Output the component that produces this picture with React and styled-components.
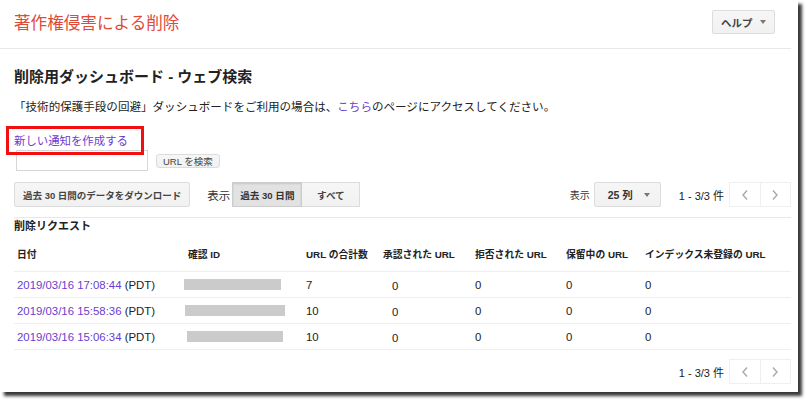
import React from "react";
import styled, { createGlobalStyle, css } from "styled-components";

const GlobalStyle = createGlobalStyle`
  html, body { margin: 0; padding: 0; background: #fff; }
  body {
    font-family: "Liberation Sans", "Noto Sans CJK JP", sans-serif;
    color: #222;
  }
  * { box-sizing: border-box; }
`;

const Frame = styled.div`
  width: 808px;
  height: 401px;
  background: #fff;
  overflow: hidden;
`;

const Card = styled.div`
  position: relative;
  width: 798px;
  height: 392px;
  background: #fff;
  box-shadow: 4px 4px 3px rgba(0, 0, 0, 0.78);
  padding-right: 7px;
  display: flex;
  flex-direction: column;
`;

const Header = styled.header`
  height: 49px;
  border-bottom: 1px solid #e8e8e8;
  display: flex;
  align-items: center;
  justify-content: space-between;
  padding: 0 16px 4px 14px;
`;

const Title = styled.h1`
  margin: 0;
  font-size: 16.6px;
  font-weight: 400;
  color: #dd4b39;
`;

const Button = styled.button`
  font-family: inherit;
  display: inline-flex;
  align-items: center;
  justify-content: center;
  white-space: nowrap;
  height: ${(p) => p.$h || 25}px;
  padding: 0 ${(p) => p.$px ?? 8}px;
  font-size: ${(p) => p.$fs || 10}px;
  font-weight: ${(p) => (p.$bold ? 700 : 400)};
  color: #444;
  background: linear-gradient(#f6f6f6, #f1f1f1);
  border: 1px solid #dcdcdc;
  border-radius: ${(p) => p.$r ?? 2}px;
  cursor: default;
  ${(p) =>
    p.$pressed &&
    css`
      background: #e2e2e2;
      border-color: #ccc;
      box-shadow: inset 0 1px 2px rgba(0, 0, 0, 0.12);
      color: #333;
    `}
`;

const HelpButton = styled(Button)`
  width: 63px;
  height: 24px;
  justify-content: space-between;
  padding: 0 8px;
  font-size: 10.5px;
  font-weight: 700;
`;

const Caret = styled.span`
  width: 0;
  height: 0;
  border-left: 3.5px solid transparent;
  border-right: 3.5px solid transparent;
  border-top: 4px solid #777;
`;

const Main = styled.main`
  flex: 1;
  display: flex;
  flex-direction: column;
  padding-left: 14px;
`;

const SubTitle = styled.h2`
  margin: 18px 0 0;
  font-size: 15px;
  line-height: 20px;
  font-weight: 700;
  color: #222;
`;

const Para = styled.p`
  margin: 12px 0 0;
  font-size: 11.55px;
  line-height: 16px;
  color: #222;
  white-space: nowrap;
`;

const Link = styled.a`
  color: #6a3dd0;
  text-decoration: none;
`;

const NewLink = styled(Link)`
  display: block;
  margin-top: 18px;
  font-size: 11.4px;
  line-height: 16px;
`;

const Annotation = styled.div`
  position: absolute;
  left: 6px;
  top: 126px;
  width: 138px;
  height: 29px;
  border: 3px solid #f30f0f;
  pointer-events: none;
`;

const SearchRow = styled.div`
  display: flex;
  align-items: center;
  gap: 8px;
  margin-top: 1px;
  padding-left: 2px;
`;

const SearchInput = styled.input`
  width: 132px;
  height: 21px;
  border: 1px solid #d6d6d6;
  background: #fff;
  padding: 0 4px;
  font-family: inherit;
`;

const Toolbar = styled.div`
  display: flex;
  align-items: center;
  justify-content: space-between;
  margin-top: 11px;
  width: 777px;
  padding-bottom: 10px;
  border-bottom: 1px solid #e8e8e8;
`;

const Group = styled.div`
  display: flex;
  align-items: center;
`;

const Label = styled.span`
  font-size: ${(p) => p.$fs || 11}px;
  color: #333;
  margin: 0 ${(p) => p.$mr ?? 0}px 0 ${(p) => p.$ml ?? 0}px;
`;

const Segmented = styled.div`
  display: flex;
  margin-left: 2px;
`;

const SegButton = styled(Button)`
  width: ${(p) => p.$w}px;
  padding: 0;
  font-size: 9.6px;
  font-weight: 700;
  border-radius: 0;
  & + & {
    border-left: none;
  }
`;

const Select = styled(Button)`
  width: 67px;
  justify-content: space-between;
  padding: 0 10px 0 13px;
  font-size: 10.5px;
  font-weight: 700;
  color: #333;
`;

const Count = styled.span`
  font-size: 11px;
  color: #222;
  margin: 0 5px 0 0;
`;

const Pager = styled.div`
  display: flex;
  height: 25px;
`;

const PageBtn = styled.span`
  width: 31.5px;
  height: 25px;
  display: flex;
  align-items: center;
  justify-content: center;
  border: 1px solid #efefef;
  & + & {
    margin-left: -1px;
  }
`;

const SectionTitle = styled.h3`
  margin: 1px 0 0;
  font-size: 11px;
  line-height: 14px;
  font-weight: 700;
  color: #222;
`;

const Table = styled.div`
  width: 777px;
  display: grid;
  grid-template-columns: 168px 121px 77px 92px 91px 79px 1fr;
`;

const HeadCell = styled.div`
  height: 39px;
  display: flex;
  align-items: center;
  padding: 4px 0 0 ${(p) => p.$pl ?? 3}px;
  font-size: 9.8px;
  font-weight: 700;
  color: #222;
  border-bottom: 1px solid #eee;
  white-space: nowrap;
`;

const Cell = styled.div`
  height: 26px;
  display: flex;
  align-items: center;
  padding-left: ${(p) => p.$pl ?? 3}px;
  padding-top: ${(p) => p.$pt ?? 0}px;
  font-size: 11.4px;
  color: #222;
  border-bottom: 1px solid #eee;
  white-space: nowrap;
`;

const Redacted = styled.span`
  display: block;
  height: 11px;
  background: #cbcbcb;
`;

const Footer = styled.div`
  width: 777px;
  display: flex;
  justify-content: flex-end;
  align-items: center;
  margin-top: 9px;
`;

const Chevron = ({ dir }) => (
  <svg width="8" height="12" viewBox="0 0 8 12" aria-hidden="true">
    <polyline
      points={dir === "left" ? "6,1.5 2,6 6,10.5" : "2,1.5 6,6 2,10.5"}
      fill="none"
      stroke="#a8a8a8"
      strokeWidth="1.4"
    />
  </svg>
);

const PagerBlock = () => (
  <Group>
    <Count>1 - 3/3 件</Count>
    <Pager>
      <PageBtn>
        <Chevron dir="left" />
      </PageBtn>
      <PageBtn>
        <Chevron dir="right" />
      </PageBtn>
    </Pager>
  </Group>
);

const headers = [
  ["日付", 3],
  ["確認 ID", 6],
  ["URL の合計数", 3],
  ["承認された URL", 3],
  ["拒否された URL", 3],
  ["保留中の URL", 3],
  ["インデックス未登録の URL", 3],
];

const rows = [
  { date: "2019/03/16 17:08:44", bar: [2, 97], total: "7" },
  { date: "2019/03/16 15:58:36", bar: [3, 100], total: "10" },
  { date: "2019/03/16 15:06:34", bar: [5, 96], total: "10" },
];

export default function App() {
  return (
    <Frame>
      <GlobalStyle />
      <Card>
        <Header>
          <Title>著作権侵害による削除</Title>
          <HelpButton>
            ヘルプ
            <Caret />
          </HelpButton>
        </Header>
        <Main>
          <SubTitle>削除用ダッシュボード - ウェブ検索</SubTitle>
          <Para>
            「技術的保護手段の回避」ダッシュボードをご利用の場合は、<Link href="#">こちら</Link>
            のページにアクセスしてください。
          </Para>
          <NewLink href="#">新しい通知を作成する</NewLink>
          <SearchRow>
            <SearchInput />
            <Button $h={14} $px={6} $fs={9.5} $r={3}>
              URL を検索
            </Button>
          </SearchRow>
          <Toolbar>
            <Group>
              <Button $px={8} $fs={9.5} $bold>
                過去 30 日間のデータをダウンロード
              </Button>
              <Label $fs={11.5} $ml={17}>
                表示
              </Label>
              <Segmented>
                <SegButton $w={70} $pressed>
                  過去 30 日間
                </SegButton>
                <SegButton $w={58}>すべて</SegButton>
              </Segmented>
            </Group>
            <Group>
              <Label $fs={10} $mr={4}>
                表示
              </Label>
              <Select>
                25 列
                <Caret />
              </Select>
              <Label $ml={18} />
              <PagerBlock />
            </Group>
          </Toolbar>
          <SectionTitle>削除リクエスト</SectionTitle>
          <Table>
            {headers.map(([h, pl]) => (
              <HeadCell key={h} $pl={pl}>
                {h}
              </HeadCell>
            ))}
            {rows.map((r) => (
              <React.Fragment key={r.date}>
                <Cell>
                  <Link href="#">{r.date}</Link>&nbsp;(PDT)
                </Cell>
                <Cell $pl={0}>
                  <Redacted style={{ marginLeft: r.bar[0], width: r.bar[1] }} />
                </Cell>
                <Cell>{r.total}</Cell>
                <Cell $pl={12} $pt={2}>
                  0
                </Cell>
                <Cell>0</Cell>
                <Cell>0</Cell>
                <Cell>0</Cell>
              </React.Fragment>
            ))}
          </Table>
          <Footer>
            <PagerBlock />
          </Footer>
        </Main>
        <Annotation />
      </Card>
    </Frame>
  );
}
